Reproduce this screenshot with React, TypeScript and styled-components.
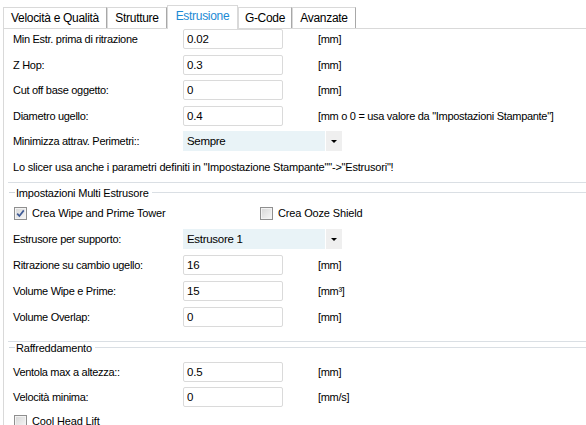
import React from "react";
import styled, { createGlobalStyle } from "styled-components";

const Global = createGlobalStyle`
  html, body { margin: 0; padding: 0; background: #fff; overflow: hidden; }
  body {
    width: 586px; height: 425px;
    font-family: "Liberation Sans", Arial, sans-serif;
    font-size: 11px; letter-spacing: -0.3px; color: #000;
  }
`;

const Window = styled.div`
  width: 586px;
  height: 425px;
  overflow: hidden;
  background: #fff;
`;

const TabStrip = styled.div`
  display: flex;
  align-items: flex-end;
  height: 23px;
  padding-top: 5px;
  margin-left: 3px;
  position: relative;
  z-index: 1;
`;

const Tab = styled.div<{ $w: number; $active?: boolean }>`
  box-sizing: border-box;
  width: ${(p) => p.$w}px;
  height: ${(p) => (p.$active ? 24 : 21)}px;
  margin-bottom: ${(p) => (p.$active ? -1 : 0)}px;
  padding-bottom: ${(p) => (p.$active ? 3 : 0)}px;
  border: 1px solid #d9d9d9;
  border-bottom: none;
  border-right-color: ${(p) => (p.$active ? "#d9d9d9" : "#a8a8a8")};
  background: #fff;
  display: flex;
  align-items: center;
  justify-content: center;
  font-size: 12px;
  color: ${(p) => (p.$active ? "#1c8ad4" : "#000")};
  white-space: nowrap;
`;

const Panel = styled.div`
  margin-left: 3px;
  border-top: 1px solid #d9d9d9;
  border-left: 1px solid #d9d9d9;
  height: 400px;
`;

const Group = styled.section<{ $pb?: number }>`
  margin-left: 4px;
  padding: 0 0 ${(p) => p.$pb ?? 0}px 5px;
  border-bottom: 1px solid #dadfe4;
  display: flex;
  flex-direction: column;
`;

const GroupHeader = styled.div<{ $h: number; $mt?: number }>`
  display: flex;
  align-items: center;
  height: ${(p) => p.$h}px;
  margin: ${(p) => p.$mt ?? 0}px 0 0 -5px;
  &::before {
    content: "";
    width: 6px;
    height: 1px;
    margin-left: 1px;
    background: #cfd6dc;
  }
  &::after {
    content: "";
    flex: 1;
    height: 1px;
    margin-left: 3px;
    background: #dadfe4;
  }
`;

const GroupTitle = styled.span`
  padding-left: 1px;
  white-space: nowrap;
  font-size: 11px;
  letter-spacing: -0.2px;
`;

const Stack = styled.div<{ $gap: number; $mt?: number }>`
  display: flex;
  flex-direction: column;
  gap: ${(p) => p.$gap}px;
  margin-top: ${(p) => p.$mt ?? 0}px;
`;

const FieldRow = styled.div`
  display: grid;
  grid-template-columns: 170px 100px auto;
  align-items: center;
  height: 20px;
  white-space: nowrap;
`;

const SelectRow = styled.div<{ $mt?: number }>`
  display: grid;
  grid-template-columns: 170px auto;
  align-items: center;
  height: 20px;
  margin-top: ${(p) => p.$mt ?? 0}px;
  white-space: nowrap;
`;

const Label = styled.span``;

const TextBox = styled.input`
  box-sizing: border-box;
  width: 100px;
  height: 20px;
  margin: 0;
  border: 1px solid #dadada;
  border-radius: 2px;
  padding: 0 3px;
  font-family: "Liberation Sans", Arial, sans-serif;
  font-size: 11.5px;
  letter-spacing: -0.2px;
  color: #000;
  background: #fff;
  outline: none;
`;

const Unit = styled.span`
  margin-left: 35px;
`;

const Select = styled.div`
  display: flex;
  height: 20px;
  width: 159px;
`;

const SelectValue = styled.div`
  width: 142px;
  box-sizing: border-box;
  padding-left: 4px;
  line-height: 20px;
  font-size: 11.5px;
  background: #e9f3f7;
`;

const SelectArrow = styled.div`
  width: 16px;
  margin-left: 1px;
  background: #efefef;
  display: flex;
  align-items: center;
  justify-content: center;
  &::after {
    content: "";
    border-left: 3px solid transparent;
    border-right: 3px solid transparent;
    border-top: 3px solid #000;
  }
`;

const Note = styled.div`
  margin-top: 9px;
  height: 14px;
  line-height: 14px;
  white-space: nowrap;
  letter-spacing: -0.2px;
`;

const CheckRow = styled.div<{ $mt?: number }>`
  display: grid;
  grid-template-columns: 246px auto;
  align-items: center;
  height: 14px;
  margin-top: ${(p) => p.$mt ?? 0}px;
  white-space: nowrap;
`;

const CheckItem = styled.label`
  display: flex;
  align-items: center;
  gap: 5px;
  padding-left: 1px;
  font-size: 11px;
  letter-spacing: -0.15px;
`;

const Box = styled.span`
  box-sizing: border-box;
  width: 13px;
  height: 13px;
  border: 1px solid #8f8f8f;
  background: linear-gradient(135deg, #d6d6d6 0%, #f7f7f7 100%);
  box-shadow: inset 0 0 0 1px #f3f3f3;
  display: flex;
  align-items: center;
  justify-content: center;
`;

const Checkbox = ({ checked, label }: { checked?: boolean; label: string }) => (
  <CheckItem>
    <Box>
      {checked && (
        <svg width="11" height="11" viewBox="0 0 11 11">
          <path d="M2.2 5.6 L4.4 8 L8.8 2.4" fill="none" stroke="#3f5b96" strokeWidth="1.7" />
        </svg>
      )}
    </Box>
    <span>{label}</span>
  </CheckItem>
);

type Field = { label: string; value: string; unit: string };

const Input = ({ f }: { f: Field }) => (
  <FieldRow>
    <Label>{f.label}</Label>
    <TextBox readOnly defaultValue={f.value} />
    <Unit>{f.unit}</Unit>
  </FieldRow>
);

const Dropdown = ({ label, value, mt }: { label: string; value: string; mt?: number }) => (
  <SelectRow $mt={mt}>
    <Label>{label}</Label>
    <Select>
      <SelectValue>{value}</SelectValue>
      <SelectArrow />
    </Select>
  </SelectRow>
);

const tabs = [
  { name: "Velocità e Qualità", w: 104 },
  { name: "Strutture", w: 60 },
  { name: "Estrusione", w: 71, active: true },
  { name: "G-Code", w: 54 },
  { name: "Avanzate", w: 64 },
];

const general: Field[] = [
  { label: "Min Estr. prima di ritrazione", value: "0.02", unit: "[mm]" },
  { label: "Z Hop:", value: "0.3", unit: "[mm]" },
  { label: "Cut off base oggetto:", value: "0", unit: "[mm]" },
  { label: "Diametro ugello:", value: "0.4", unit: '[mm o 0 = usa valore da "Impostazioni Stampante"]' },
];

const multi: Field[] = [
  { label: "Ritrazione su cambio ugello:", value: "16", unit: "[mm]" },
  { label: "Volume Wipe e Prime:", value: "15", unit: "[mm³]" },
  { label: "Volume Overlap:", value: "0", unit: "[mm]" },
];

const cooling: Field[] = [
  { label: "Ventola max a altezza::", value: "0.5", unit: "[mm]" },
  { label: "Velocità minima:", value: "0", unit: "[mm/s]" },
];

export default function App() {
  return (
    <Window>
      <Global />
      <TabStrip>
        {tabs.map((t) => (
          <Tab key={t.name} $w={t.w} $active={t.active}>
            {t.name}
          </Tab>
        ))}
      </TabStrip>
      <Panel>
        <Group $pb={8}>
          <Stack $gap={5.5}>
            {general.map((f) => (
              <Input key={f.label} f={f} />
            ))}
            <Dropdown label="Minimizza attrav. Perimetri::" value="Sempre" />
          </Stack>
          <Note>Lo slicer usa anche i parametri definiti in "Impostazione Stampante""-&gt;"Estrusori"!</Note>
        </Group>

        <Group $pb={14}>
          <GroupHeader $h={13} $mt={3}>
            <GroupTitle>Impostazioni Multi Estrusore</GroupTitle>
          </GroupHeader>
          <CheckRow $mt={7}>
            <Checkbox checked label="Crea Wipe and Prime Tower" />
            <Checkbox label="Crea Ooze Shield" />
          </CheckRow>
          <Dropdown label="Estrusore per supporto:" value="Estrusore 1" mt={9} />
          <Stack $gap={6} $mt={6}>
            {multi.map((f) => (
              <Input key={f.label} f={f} />
            ))}
          </Stack>
        </Group>

        <Group $pb={10}>
          <GroupHeader $h={11}>
            <GroupTitle>Raffreddamento</GroupTitle>
          </GroupHeader>
          <Stack $gap={5} $mt={9}>
            {cooling.map((f) => (
              <Input key={f.label} f={f} />
            ))}
          </Stack>
          <CheckRow $mt={7}>
            <Checkbox label="Cool Head Lift" />
          </CheckRow>
        </Group>
      </Panel>
    </Window>
  );
}
